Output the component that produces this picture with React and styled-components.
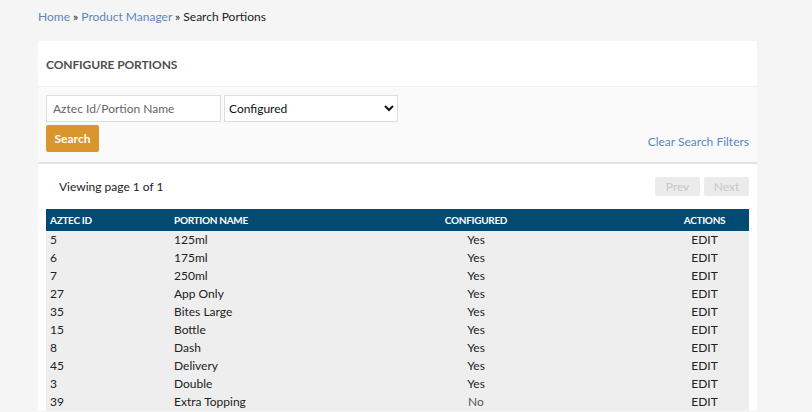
import React from 'react'
import styled, { createGlobalStyle } from 'styled-components'

const rows = [
  ['5', '125ml', 'Yes'],
  ['6', '175ml', 'Yes'],
  ['7', '250ml', 'Yes'],
  ['27', 'App Only', 'Yes'],
  ['35', 'Bites Large', 'Yes'],
  ['15', 'Bottle', 'Yes'],
  ['8', 'Dash', 'Yes'],
  ['45', 'Delivery', 'Yes'],
  ['3', 'Double', 'Yes'],
  ['39', 'Extra Topping', 'No']
]

const GlobalStyle = createGlobalStyle`
  html, body {
    margin: 0;
    background: #f5f5f5;
    font-family: Lato, "Open Sans", sans-serif;
    color: #222;
  }
`

const App = () => {
  return (
    <Page>
      <GlobalStyle />
      <Breadcrumb>
        <Crumb href="#">Home</Crumb> » <Crumb href="#">Product Manager</Crumb> » Search Portions
      </Breadcrumb>
      <Card>
        <CardHeader>Configure Portions</CardHeader>
        <Filters>
          <FilterRow>
            <TextInput placeholder="Aztec Id/Portion Name" />
            <SelectBox defaultValue="Configured">
              <option>Configured</option>
              <option>Not Configured</option>
              <option>All</option>
            </SelectBox>
          </FilterRow>
          <ActionRow>
            <SearchButton>Search</SearchButton>
            <ClearLink href="#">Clear Search Filters</ClearLink>
          </ActionRow>
        </Filters>
        <Results>
          <Pager>
            <PageInfo>Viewing page 1 of 1</PageInfo>
            <PagerButtons>
              <PageButton disabled>Prev</PageButton>
              <PageButton disabled>Next</PageButton>
            </PagerButtons>
          </Pager>
          <Table>
            <colgroup>
              <col style={{ width: 124 }} />
              <col style={{ width: 122 }} />
              <col style={{ width: 368 }} />
              <col style={{ width: 89 }} />
            </colgroup>
            <thead>
              <tr>
                <Th>Aztec ID</Th>
                <Th>Portion Name</Th>
                <Th $center>Configured</Th>
                <Th $center>Actions</Th>
              </tr>
            </thead>
            <tbody>
              {rows.map(([id, name, conf]) => (
                <tr key={id}>
                  <Td>{id}</Td>
                  <Td>{name}</Td>
                  <Td $center $muted={conf === 'No'}>{conf}</Td>
                  <Td $center>EDIT</Td>
                </tr>
              ))}
            </tbody>
          </Table>
        </Results>
      </Card>
    </Page>
  )
}

const Page = styled.div`
  padding: 9px 55px 0 38px;
  height: 412px;
  box-sizing: border-box;
  overflow: hidden;
`

const Breadcrumb = styled.div`
  font-size: 12px;
  line-height: 16px;
  color: #222;
  margin-bottom: 16px;
`

const Crumb = styled.a`
  color: #5b87bd;
  text-decoration: none;
`

const Card = styled.div`
  background: #fff;
  width: 719px;
`

const CardHeader = styled.div`
  height: 46px;
  box-sizing: border-box;
  padding: 16px 8px 0;
  font-size: 12px;
  font-weight: 700;
  text-transform: uppercase;
  color: #4f4f4f;
  letter-spacing: -0.1px;
  border-bottom: 1px solid #f0f0f0;
`

const Filters = styled.div`
  background: #fafafa;
  padding: 8px 8px 10px;
  border-bottom: 2px solid #e2e2e2;
`

const FilterRow = styled.div`
  display: flex;
  gap: 3px;
`

const TextInput = styled.input`
  width: 175px;
  height: 27px;
  box-sizing: border-box;
  border: 1px solid #ddd;
  padding: 0 6px;
  font-family: inherit;
  font-size: 12px;
  background: #fff;
  &::placeholder {
    color: #666;
  }
`

const SelectBox = styled.select`
  width: 174px;
  height: 27px;
  box-sizing: border-box;
  border: 1px solid #ddd;
  border-radius: 0;
  padding: 0;
  font-family: inherit;
  font-size: 12px;
  color: #111;
  background: #fff;
`

const ActionRow = styled.div`
  display: flex;
  justify-content: space-between;
  align-items: flex-end;
  margin-top: 3px;
`

const SearchButton = styled.button`
  width: 53px;
  height: 27px;
  border: none;
  border-radius: 2px;
  background: #d8962c;
  color: #fff;
  font-family: inherit;
  font-size: 12px;
  font-weight: 700;
  padding: 0;
`

const ClearLink = styled.a`
  font-size: 12px;
  color: #5b87bd;
  text-decoration: none;
  margin-bottom: 3px;
`

const Results = styled.div`
  padding: 13px 8px 0;
`

const Pager = styled.div`
  display: flex;
  justify-content: space-between;
  align-items: center;
  margin-bottom: 13px;
`

const PageInfo = styled.span`
  font-size: 12px;
  padding-left: 13px;
`

const PagerButtons = styled.div`
  display: flex;
  gap: 4px;
`

const PageButton = styled.button`
  width: 45px;
  height: 19px;
  border: none;
  border-radius: 2px;
  background: #ebebeb;
  color: #c8c8c8;
  font-family: inherit;
  font-size: 12px;
  padding: 0;
`

const Table = styled.table`
  width: 703px;
  border-collapse: collapse;
  table-layout: fixed;
`

const Th = styled.th`
  background: #014b73;
  color: #fff;
  height: 22px;
  padding: 0 4px;
  font-size: 10px;
  font-weight: 700;
  text-transform: uppercase;
  letter-spacing: -0.3px;
  text-align: ${props => (props.$center ? 'center' : 'left')};
`

const Td = styled.td`
  background: #eeeeee;
  height: 18px;
  padding: 0 4px;
  font-size: 12px;
  line-height: 18px;
  color: ${props => (props.$muted ? '#555' : '#222')};
  text-align: ${props => (props.$center ? 'center' : 'left')};
`

export default App
